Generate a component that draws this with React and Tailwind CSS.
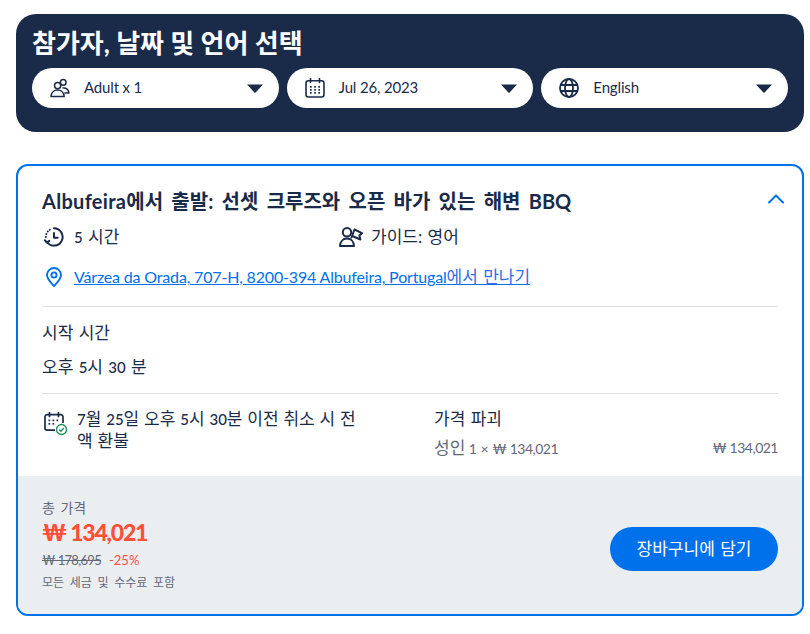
import React from "react";

const navy = "#1a2b49";
const font = { fontFamily: '"Lato", "Noto Sans CJK KR", sans-serif' };

function Caret() {
  return (
    <svg width="16" height="9" viewBox="0 0 16 9" className="shrink-0">
      <path d="M0 0.5h16L8.6 8.4a.8.8 0 0 1-1.2 0z" fill={navy} />
    </svg>
  );
}

function PeopleIcon() {
  return (
    <svg width="20" height="20" viewBox="0 0 20 20" fill="none" stroke={navy} strokeWidth="1.5" strokeLinejoin="round">
      <circle cx="7.6" cy="7.6" r="3.1" />
      <circle cx="13.2" cy="4.4" r="2.8" />
      <path d="M1 18.6c.2-4 3-6.6 6.6-6.6s6.4 2.6 6.6 6.6z" />
      <path d="M12.4 9.6c.5.2 1 .3 1.4.3 2.7 0 4.7 2 5.2 5.2h-4.6" />
    </svg>
  );
}

function CalendarIcon() {
  return (
    <svg width="20" height="20" viewBox="0 0 20 20" fill="none" stroke={navy} strokeWidth="1.6">
      <rect x="1" y="2.800" width="18" height="16.200" rx="2.400" />
      <path d="M5.500 0.500v4M14.500 0.500v4" strokeLinecap="round" />
      <g fill={navy} stroke="none">
        <rect x="5" y="8" width="1.700" height="1.700" />
        <rect x="9.200" y="8" width="1.700" height="1.700" />
        <rect x="13.300" y="8" width="1.700" height="1.700" />
        <rect x="5" y="11" width="1.700" height="1.700" />
        <rect x="9.200" y="11" width="1.700" height="1.700" />
        <rect x="13.300" y="11" width="1.700" height="1.700" />
        <rect x="5" y="14" width="1.700" height="1.700" />
        <rect x="9.200" y="14" width="1.700" height="1.700" />
        <rect x="13.300" y="14" width="1.700" height="1.700" />
      </g>
    </svg>
  );
}

function GlobeIcon() {
  return (
    <svg width="20" height="20" viewBox="0 0 20 20" fill="none" stroke={navy} strokeWidth="1.800">
      <circle cx="10" cy="10" r="9" />
      <ellipse cx="10" cy="10" rx="4" ry="9" />
      <path d="M1.600 7h16.800M1.600 13h16.800" />
    </svg>
  );
}

function HistoryIcon() {
  return (
    <svg width="20" height="20" viewBox="0 0 22 22" fill="none" stroke={navy} strokeWidth="2.200" strokeLinecap="round" strokeLinejoin="round" className="ml-[2px]">
      <path d="M11 1.500a9.500 9.500 0 1 1-7.800 15" />
      <path d="M11 6.500v5.200h4" />
      <path d="M1 14.600l2.200 2.400 2.600-1.800" />
      <path d="M2 11v.01M2.600 7.800v.01M4.200 5v.01M6.400 3v.01" strokeWidth="2.200" />
    </svg>
  );
}

function GuideIcon() {
  return (
    <svg width="24" height="22" viewBox="0 0 24 22" fill="none" stroke={navy} strokeWidth="2" strokeLinejoin="round" strokeLinecap="round">
      <circle cx="8" cy="6.200" r="4.200" />
      <path d="M1 20c.2-4.600 3-7.400 7-7.400s6.800 2.800 7 7.400z" />
      <path d="M12.500 11.500L15.500 3.500l7.500 3.700-2.600 2.400 1 3.900-7-3" />
    </svg>
  );
}

function PinIcon() {
  return (
    <svg width="16" height="20" viewBox="0 0 16 20" fill="none" stroke="#0071eb" strokeWidth="1.900">
      <path d="M8 19C5 15.800 1 12 1 8a7 7 0 0 1 14 0c0 4-4 7.800-7 11z" strokeLinejoin="round" />
      <circle cx="8" cy="8" r="2.600" />
    </svg>
  );
}

function CalendarCheckIcon() {
  return (
    <svg width="24" height="24" viewBox="0 0 24 24" fill="none">
      <g stroke={navy} strokeWidth="1.700">
        <path d="M11 18.200H3.200A2.200 2.200 0 0 1 1 16V4.800a2.200 2.200 0 0 1 2.200-2.200h13.600A2.200 2.200 0 0 1 19 4.800V11" />
        <path d="M5.500 0.500v4M14.500 0.500v4" strokeLinecap="round" />
      </g>
      <g fill={navy}>
        <rect x="4.500" y="7.500" width="1.700" height="1.700" />
        <rect x="8.500" y="7.500" width="1.700" height="1.700" />
        <rect x="12.500" y="7.500" width="1.700" height="1.700" />
        <rect x="4.500" y="11" width="1.700" height="1.700" />
        <rect x="8.500" y="11" width="1.700" height="1.700" />
      </g>
      <circle cx="17.500" cy="17.500" r="5" fill="#fff" stroke="#1e8a5a" strokeWidth="1.300" />
      <path d="M15.200 17.500l1.700 1.700 3-3.200" stroke="#1e8a5a" strokeWidth="1.300" fill="none" />
    </svg>
  );
}

function Pill({ icon, label }) {
  return (
    <div className="flex h-10 items-center rounded-[20px] bg-white pl-[18px] pr-[16px]">
      <span className="flex w-[34px] shrink-0 items-center">{icon}</span>
      <span className="flex-1 pb-[2px] text-[15px] tracking-[-0.15px] text-[#1a2b49]">{label}</span>
      <Caret />
    </div>
  );
}

function N({ children }) {
  return <span className="text-[15px] font-medium">{children}</span>;
}

export default function App() {
  return (
    <div className="min-h-[634px] bg-white pl-4 pr-[6px] pt-[14px]" style={font}>
      <section className="h-[118px] rounded-[20px] bg-[#1a2b49] px-4 pt-[11px]">
        <h2 className="h-[43px] text-[26px] font-bold leading-[36px] text-white">참가자, 날짜 및 언어 선택</h2>
        <div className="grid grid-cols-3 gap-2">
          <Pill icon={<PeopleIcon />} label="Adult x 1" />
          <Pill icon={<CalendarIcon />} label="Jul 26, 2023" />
          <Pill icon={<GlobeIcon />} label="English" />
        </div>
      </section>

      <section className="mt-8 overflow-hidden rounded-xl border-2 border-[#0071eb] bg-white">
        <div className="px-6">
          <div className="flex h-[59px] items-center justify-between pt-[11px]">
            <h3 className="text-[20px] font-bold text-[#1a2b49] [word-spacing:3.4px]"><span className="tracking-[0.3px]">Albufeira</span><span>에서 출발: 선셋 크루즈와 오픈 바가 있는 해변 BBQ</span></h3>
            <svg width="18" height="10" viewBox="0 0 18 10" fill="none" stroke="#0071eb" strokeWidth="2" strokeLinecap="round" strokeLinejoin="round" className="mb-[4px] mr-[-7px]">
              <path d="M2 8.500l7-7 7 7" />
            </svg>
          </div>
          <div className="flex h-6 items-center text-[17px] text-[#1a2b49] [word-spacing:1px]">
            <div className="flex w-[297px] items-center gap-[10px]">
              <HistoryIcon />
              <span><N>5</N><span> 시간</span></span>
            </div>
            <div className="flex items-center gap-2">
              <GuideIcon />
              <span>가이드: 영어</span>
            </div>
          </div>
          <div className="mt-4 flex h-6 items-center gap-[12px] pl-[4px] text-[16px]">
            <PinIcon />
            <a className="text-[#0071eb] underline"><span className="tracking-[-0.17px]">Várzea da Orada, 707-H, 8200-394 Albufeira, Portugal</span><span className="text-[17px] text-[#2f6fe8] [word-spacing:1px]">에서 만나기</span></a>
          </div>
          <div className="mt-[17px] border-t border-[#dcdfe4]" />
          <div className="pt-[14px] text-[17px] leading-[24px] text-[#1a2b49] [word-spacing:1px]">시작 시간</div>
          <div className="mt-[10px] text-[17px] leading-[24px] text-[#1a2b49] [word-spacing:1px]"><span>오후 </span><N>5</N><span>시 </span><N>30</N><span> 분</span></div>
          <div className="mt-[14px] border-t border-[#dcdfe4]" />
          <div className="flex h-[82px] pt-[14px]">
            <div className="flex w-[392px] gap-[9px]">
              <span className="ml-[2px] shrink-0 pt-[4px]"><CalendarCheckIcon /></span>
              <p className="w-[290px] text-[17px] leading-[22px] text-[#1a2b49] [word-spacing:0.5px]">
                <N>7</N><span>월 </span><N>25</N><span>일 오후 </span><N>5</N><span>시 </span><N>30</N><span>분 이전 취소 시 전</span><br /><span>액 환불</span>
              </p>
            </div>
            <div className="flex-1">
              <div className="text-[17px] leading-[22px] text-[#1a2b49] [word-spacing:1px]">가격 파괴</div>
              <div className="mt-[7px] flex justify-between text-[14px] leading-[22px] text-[#63687a]">
                <span><span className="text-[17px]">성인</span><span> 1 × </span><span className="tracking-[-0.5px]">₩ 134,021</span></span>
                <span className="tracking-[-0.5px]">₩ 134,021</span>
              </div>
            </div>
          </div>
        </div>
        <div className="flex h-[138px] items-center justify-between bg-[#ebeef1] pl-6 pr-6">
          <div>
            <div className="text-[14px] leading-[20px] text-[#63687a] [word-spacing:2px]">총 가격</div>
            <div className="-mt-[1px] text-[23px] font-black leading-[30px] tracking-[-1.2px] text-[#ff4f38]">₩ 134,021</div>
            <div className="mt-[3px] flex gap-2 text-[13px] leading-[20px]">
              <span className="tracking-[-0.7px] text-[#63687a] line-through">₩ 178,695</span>
              <span className="text-[#ff4f38]">-25%</span>
            </div>
            <div className="mt-[3px] text-[12px] leading-[20px] text-[#63687a] [word-spacing:2.6px]">모든 세금 및 수수료 포함</div>
          </div>
          <button className="mt-[8px] h-11 w-[168px] rounded-[22px] bg-[#0071eb] text-[17px] text-white [word-spacing:1px]">장바구니에 담기</button>
        </div>
      </section>
    </div>
  );
}
